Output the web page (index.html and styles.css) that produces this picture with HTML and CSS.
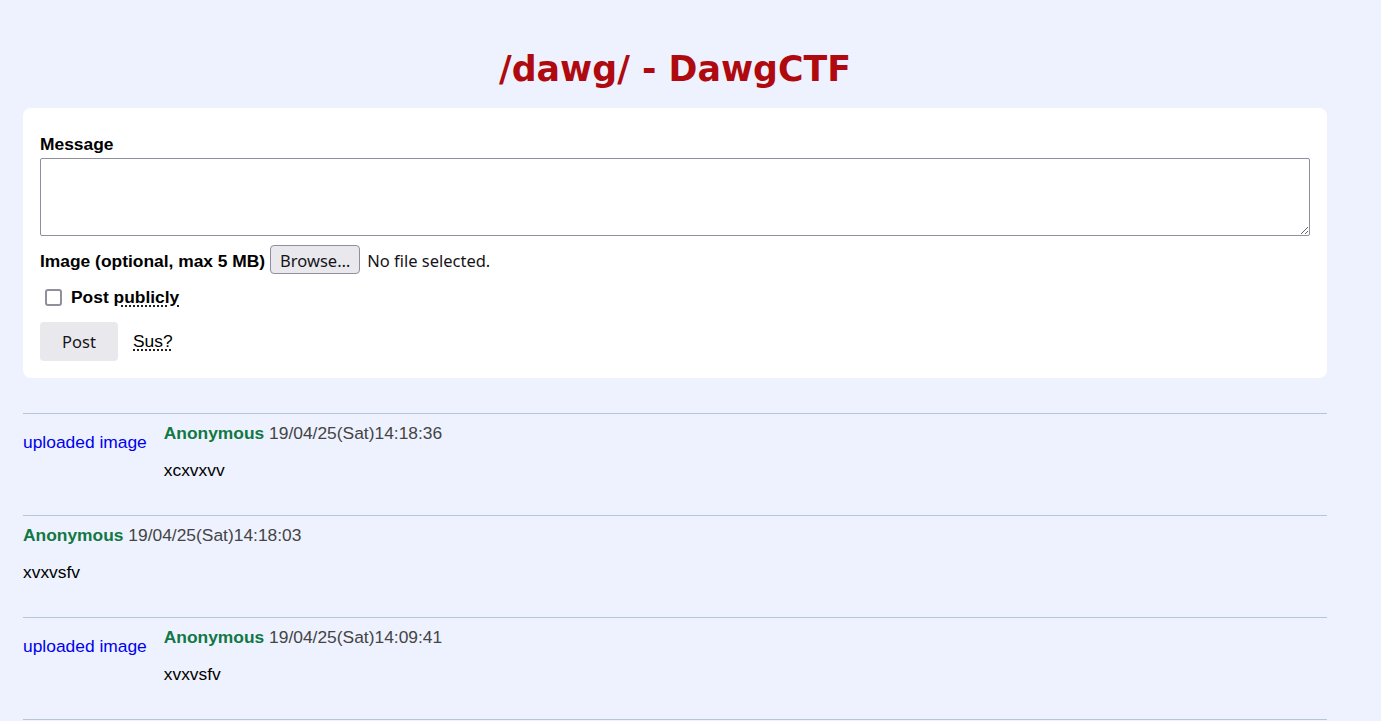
FILE: index.html
```html
<!DOCTYPE html>
<html lang="en">
<head>
<meta charset="utf-8">
<title>/dawg/ - DawgCTF</title>
<link rel="stylesheet" href="styles.css">
</head>
<body>
<div class="wrap">
  <h1 class="board-title">/dawg/ - DawgCTF</h1>
  <form class="post-form">
    <label class="field-label" for="msg">Message</label>
    <textarea id="msg" class="msg-box"></textarea>
    <div class="file-row">
      <span class="field-label">Image (optional, max 5 MB)</span>
      <span class="file-btn">Browse…</span>
      <span class="file-status">No file selected.</span>
    </div>
    <label class="check-row">
      <input type="checkbox" class="check">
      <span class="field-label">Post <abbr class="dotted" title="publicly">publicly</abbr></span>
    </label>
    <div class="action-row">
      <button type="button" class="post-btn">Post</button>
      <a class="sus" href="#">Sus?</a>
    </div>
  </form>

  <div class="posts">
    <div class="post">
      <a class="img-link" href="#">uploaded image</a>
      <div class="post-body">
        <div class="meta"><span class="name">Anonymous</span> <span class="date">19/04/25(Sat)14:18:36</span></div>
        <p class="msg">xcxvxvv</p>
      </div>
    </div>
    <div class="post">
      <div class="post-body">
        <div class="meta"><span class="name">Anonymous</span> <span class="date">19/04/25(Sat)14:18:03</span></div>
        <p class="msg">xvxvsfv</p>
      </div>
    </div>
    <div class="post">
      <a class="img-link" href="#">uploaded image</a>
      <div class="post-body">
        <div class="meta"><span class="name">Anonymous</span> <span class="date">19/04/25(Sat)14:09:41</span></div>
        <p class="msg">xvxvsfv</p>
      </div>
    </div>
  </div>
</div>
</body>
</html>
```

FILE: styles.css
```css
html, body {
  margin: 0;
  padding: 0;
}
body {
  background: #eef2ff;
  font-family: "Liberation Sans", Arial, sans-serif;
  font-size: 17.4px;
  color: #000;
}
.wrap {
  width: 1304px;
  margin-left: 23px;
}
.board-title {
  margin: 49px 0 19px;
  text-align: center;
  font-family: "DejaVu Sans", sans-serif;
  font-weight: bold;
  font-size: 34.8px;
  color: #af0a0f;
}
.post-form {
  background: #fff;
  border-radius: 8px;
  padding: 26px 17px 17px;
  display: flex;
  flex-direction: column;
}
.field-label {
  font-weight: bold;
  font-size: 17.4px;
}
.msg-box {
  margin-top: 3px;
  height: 78px;
  box-sizing: border-box;
  border: 1px solid #8f8f9d;
  border-radius: 2px;
  font-family: "Liberation Sans", sans-serif;
  resize: vertical;
}
.file-row {
  margin-top: 9px;
  display: flex;
  align-items: baseline;
}
.file-btn {
  margin-left: 5px;
  box-sizing: border-box;
  width: 90px;
  height: 29px;
  padding: 2px 0 0;
  display: inline-flex;
  align-items: center;
  justify-content: center;
  font-family: "Noto Sans", sans-serif;
  font-size: 16.5px;
  background: #e9e9ed;
  border: 1px solid #8f8f9d;
  border-radius: 4px;
  color: #15141a;
}
.file-status {
  margin-left: 7px;
  font-family: "Noto Sans", sans-serif;
  font-size: 16.5px;
  color: #15141a;
}
.check-row {
  margin-top: 13px;
  display: flex;
  align-items: center;
}
.check {
  appearance: none;
  margin: 0 9px 0 5px;
  width: 17px;
  height: 17px;
  box-sizing: border-box;
  border: 2px solid #8f8f9d;
  border-radius: 3px;
  background: #fff;
}
.dotted {
  text-decoration: underline dotted;
  text-underline-offset: 3px;
}
.action-row {
  margin-top: 14px;
  display: flex;
  align-items: center;
}
.post-btn {
  width: 78px;
  height: 39px;
  border: none;
  border-radius: 4px;
  background: #e9e9ed;
  font-family: "Noto Sans", sans-serif;
  font-size: 16.5px;
  color: #15141a;
}
.sus {
  margin-left: 15px;
  color: #000;
  text-decoration: underline dotted;
  text-underline-offset: 3px;
}
.posts {
  margin-top: 35px;
}
.post {
  border-top: 1px solid #b7c5d9;
  padding: 9px 0 18px;
  display: flex;
  align-items: flex-start;
}
.post:last-child {
  border-bottom: 1px solid #b7c5d9;
}
.img-link {
  margin-top: 9px;
  margin-right: 17px;
  color: #0000ee;
  text-decoration: none;
  line-height: 20px;
}
.meta {
  line-height: 20px;
}
.name {
  color: #117743;
  font-weight: bold;
}
.date {
  color: #444;
}
.msg {
  margin: 17px 0;
  line-height: 20px;
}
```
